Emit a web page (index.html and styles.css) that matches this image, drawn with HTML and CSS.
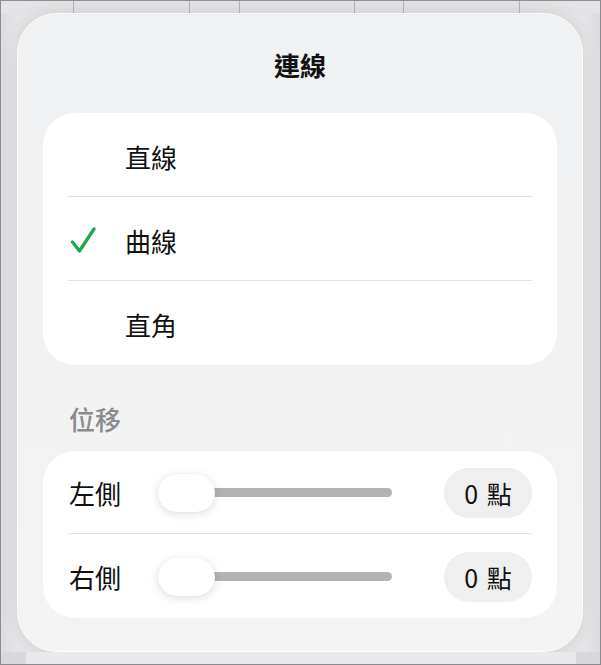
FILE: index.html
```html
<!DOCTYPE html>
<html lang="zh-Hant">
<head>
<meta charset="utf-8">
<title>連線</title>
<link rel="stylesheet" href="styles.css">
</head>
<body>
<div class="frame">
  <div class="top-strip">
    <span class="cell c1"></span><span class="cell c2"></span><span class="cell c3"></span><span class="cell c4"></span><span class="cell c5"></span><span class="cell c6"></span><span class="cell c7"></span>
  </div>
  <div class="panel">
    <div class="title">連線</div>
    <div class="card">
      <div class="opt"><span class="check"></span><span class="opt-text">直線</span></div>
      <div class="opt"><span class="check"><svg width="26" height="30" viewBox="0 0 26 30"><path d="M2.5 18 L9.5 27 L24 5" fill="none" stroke="#1ea853" stroke-width="3.3" stroke-linecap="round" stroke-linejoin="round"/></svg></span><span class="opt-text">曲線</span></div>
      <div class="opt"><span class="check"></span><span class="opt-text">直角</span></div>
    </div>
    <div class="section-label">位移</div>
    <div class="card">
      <div class="srow">
        <span class="slabel">左側</span>
        <div class="slider"><div class="track"></div><div class="thumb"></div></div>
        <span class="pill">0 點</span>
      </div>
      <div class="srow">
        <span class="slabel">右側</span>
        <div class="slider"><div class="track"></div><div class="thumb"></div></div>
        <span class="pill">0 點</span>
      </div>
    </div>
  </div>
  <div class="bottom-strip"><div class="bottom-inner"></div></div>
</div>
</body>
</html>
```
FILE: styles.css
```css
html, body {
  margin: 0;
  padding: 0;
}
body {
  width: 601px;
  height: 665px;
  background: #e4e4e6;
  font-family: "Noto Sans CJK TC", "Noto Sans", sans-serif;
  color: #111;
}
.frame {
  box-sizing: border-box;
  width: 601px;
  height: 665px;
  border: 1px solid #8d8d8f;
  background: linear-gradient(90deg, #dcdcde 0px, #e6e6e8 16px, #e6e6e8 584px, #dcdcde 599px);
  display: flex;
  flex-direction: column;
  overflow: hidden;
}
.top-strip {
  height: 12px;
  display: flex;
  flex: none;
  background: #e3e4e6;
}
.cell {
  display: block;
  height: 100%;
  border-right: 1px solid #b4b4b6;
}
.c1 { width: 72px; }
.c2 { width: 115px; }
.c3 { width: 49px; }
.c4 { width: 114px; }
.c5 { width: 48px; }
.c6 { width: 115px; }
.c7 { flex: 1; border-right: none; }

.panel {
  flex: none;
  box-sizing: border-box;
  margin: 0 17px 0 16px;
  height: 639px;
  padding: 0 25px;
  background: linear-gradient(180deg, #eff1f2 0%, #f2f2f3 40%, #f3f3f4 100%);
  border: 1px solid #fbfbfb;
  border-radius: 40px;
  box-shadow: 0 0 18px rgba(0, 0, 0, 0.10);
  display: flex;
  flex-direction: column;
}
.title {
  height: 99px;
  display: flex;
  align-items: center;
  justify-content: center;
  font-size: 26px;
  font-weight: 700;
  color: #111;
  padding-top: 1px;
  box-sizing: border-box;
}
.card {
  background: #fff;
  border-radius: 32px;
  padding: 0 25px 0 25px;
}
.opt {
  height: 84px;
  box-sizing: border-box;
  display: flex;
  align-items: center;
  border-bottom: 1px solid #e3e3e5;
}
.opt:last-child {
  border-bottom: none;
}
.check {
  width: 57px;
  flex: none;
  display: flex;
  align-items: center;
  padding-left: 2px;
  box-sizing: border-box;
}
.check svg {
  display: block;
}
.opt-text {
  font-size: 26px;
  line-height: 30px;
  padding-top: 4px;
}
.section-label {
  height: 86px;
  box-sizing: border-box;
  padding: 39px 0 0 26px;
  font-size: 26px;
  line-height: 30px;
  font-weight: 500;
  color: #8b8b8f;
}
.srow {
  height: 83px;
  box-sizing: border-box;
  display: flex;
  align-items: center;
  border-bottom: 1px solid #e3e3e5;
}
.srow:last-child {
  border-bottom: none;
  height: 84px;
}
.slabel {
  width: 90px;
  flex: none;
  font-size: 26px;
  line-height: 30px;
  padding: 2px 0 0 1px;
  box-sizing: border-box;
}
.slider {
  position: relative;
  width: 234px;
  height: 38px;
  flex: none;
  margin-top: 2px;
}
.track {
  position: absolute;
  left: 20px;
  right: 0;
  top: 14px;
  height: 9px;
  border-radius: 5px;
  background: #b3b3b4;
}
.thumb {
  position: absolute;
  left: 0;
  top: 0;
  width: 57px;
  height: 38px;
  border-radius: 19px;
  background: #fff;
  box-shadow: 0 2px 10px rgba(0, 0, 0, 0.13), 0 0 2px rgba(0, 0, 0, 0.05);
}
.pill {
  margin-left: auto;
  width: 88px;
  height: 50px;
  border-radius: 25px;
  background: #efeff0;
  display: flex;
  align-items: center;
  justify-content: center;
  font-size: 25px;
  word-spacing: 3px;
  margin-top: 2px;
}
.bottom-strip {
  flex: 1;
  display: flex;
  padding: 0 24px 0 25px;
  background: #d9d9db;
}
.bottom-inner {
  flex: 1;
  background: #e9e9eb;
}
```
